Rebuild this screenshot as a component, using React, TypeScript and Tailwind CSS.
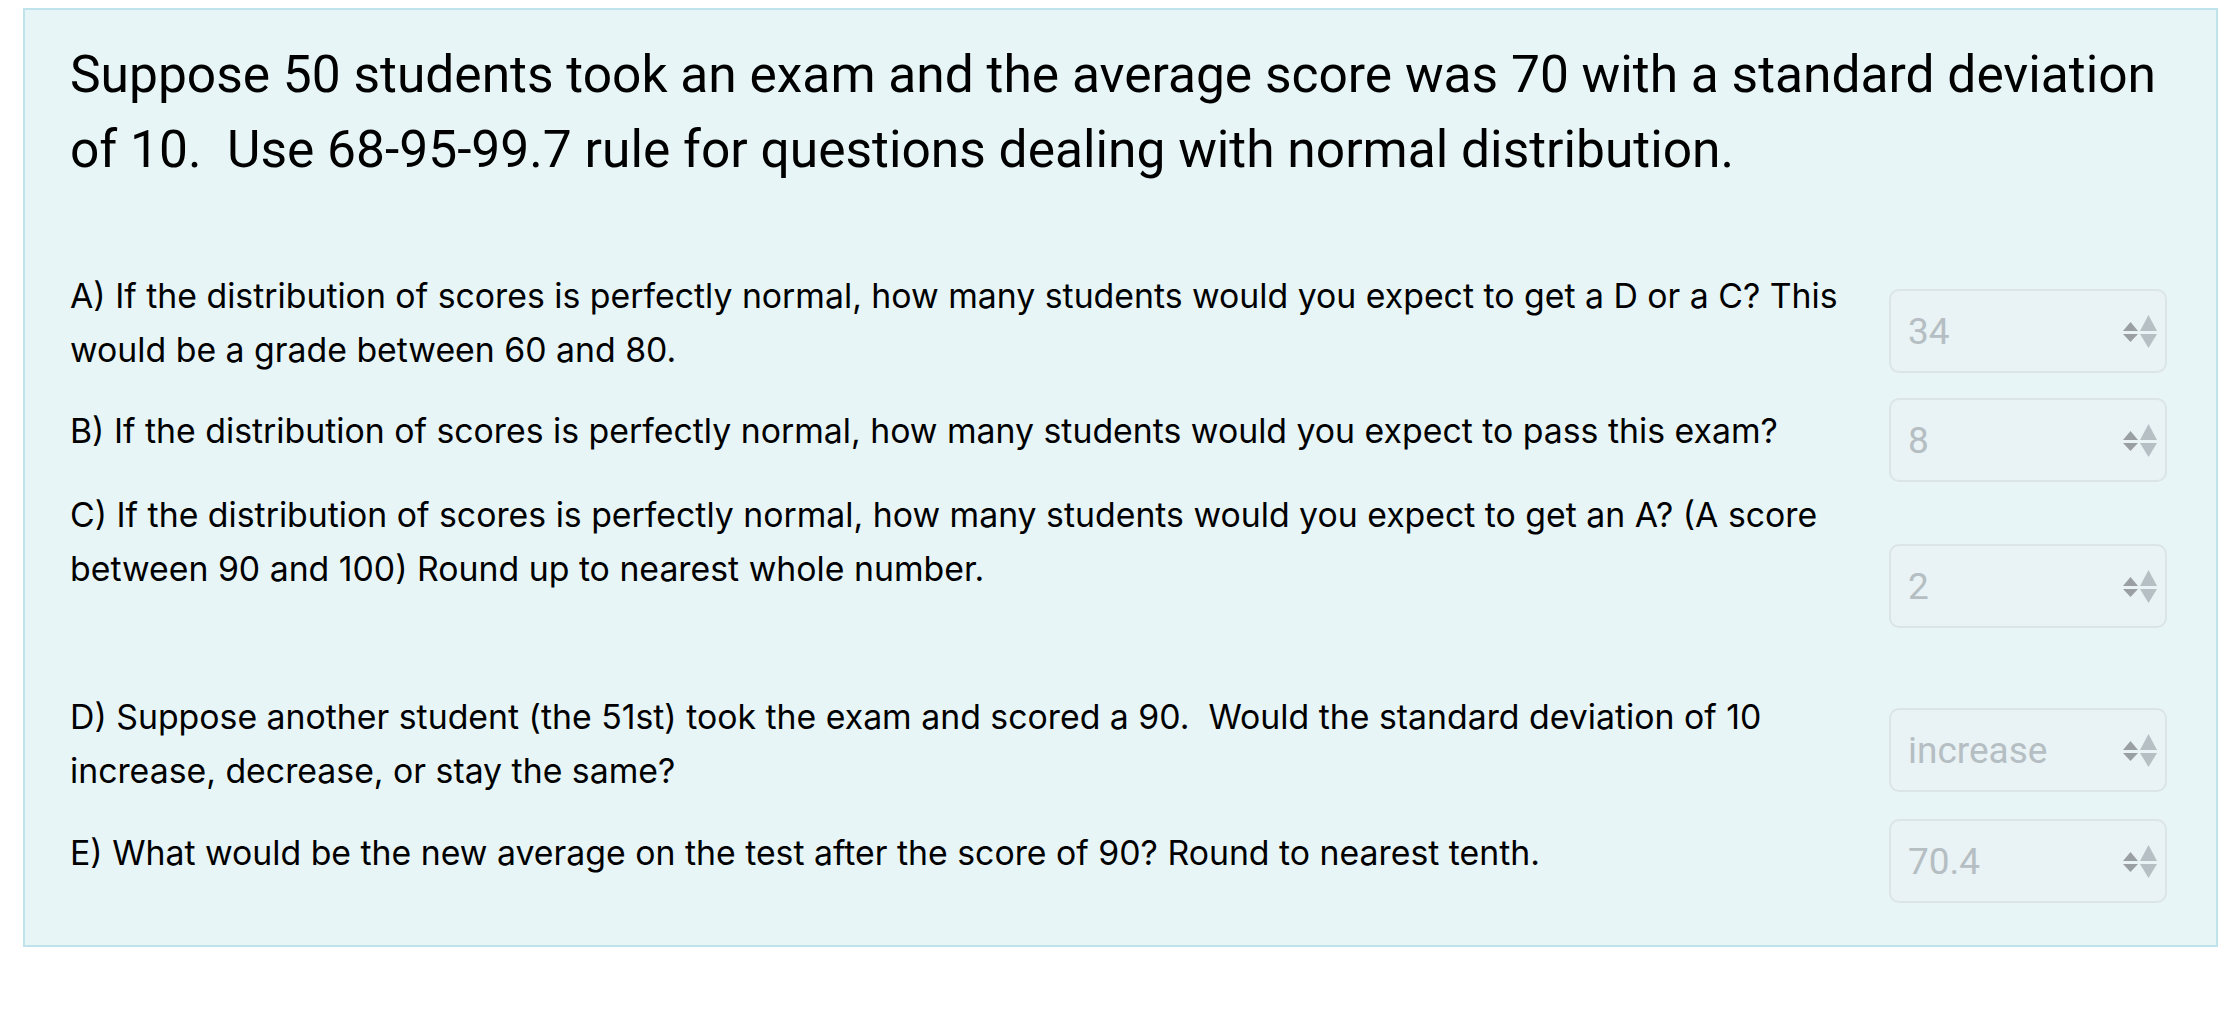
import React from 'react';

type Question = {
  text: string;
  answer: string;
  rowMt: string;
  textMt: string;
  inputMt: string;
};

const questions: Question[] = [
  {
    text: 'A) If the distribution of scores is perfectly normal, how many students would you expect to get a D or a C? This would be a grade between 60 and 80.',
    answer: '34',
    rowMt: 'mt-0',
    textMt: 'mt-0',
    inputMt: 'mt-[20px]',
  },
  {
    text: 'B) If the distribution of scores is perfectly normal, how many students would you expect to pass this exam?',
    answer: '8',
    rowMt: 'mt-[22px]',
    textMt: 'mt-[6px]',
    inputMt: 'mt-0',
  },
  {
    text: 'C) If the distribution of scores is perfectly normal, how many students would you expect to get an A? (A score between 90 and 100) Round up to nearest whole number.',
    answer: '2',
    rowMt: 'mt-[6px]',
    textMt: 'mt-0',
    inputMt: 'mt-[56px]',
  },
  {
    text: 'D) Suppose another student (the 51st) took the exam and scored a 90.  Would the standard deviation of 10 increase, decrease, or stay the same?',
    answer: 'increase',
    rowMt: 'mt-[62px]',
    textMt: 'mt-0',
    inputMt: 'mt-[18px]',
  },
  {
    text: 'E) What would be the new average on the test after the score of 90? Round to nearest tenth.',
    answer: '70.4',
    rowMt: 'mt-[22px]',
    textMt: 'mt-[7px]',
    inputMt: 'mt-0',
  },
];

function SpinArrows() {
  return (
    <svg width="34" height="33" viewBox="0 0 34 33" className="shrink-0">
      <polygon points="0,16 7.5,7 15,16" fill="#9a9fa3" />
      <polygon points="0,19 15,19 7.5,27" fill="#9a9fa3" />
      <polygon points="17,16 25.5,0 34,16" fill="#b6c0c4" />
      <polygon points="17,19 34,19 25.5,33" fill="#b6c0c4" />
    </svg>
  );
}

function AnswerBox({ value }: { value: string }) {
  return (
    <div className="flex h-[84px] w-[278px] items-center justify-between rounded-[10px] border-2 border-[#dbe4e7] bg-[#e9f2f4] pl-[17px] pr-[8px]">
      <span className="font-['Roboto',sans-serif] text-[37px] leading-none text-[#b5bec2]">{value}</span>
      <SpinArrows />
    </div>
  );
}

export default function App() {
  return (
    <div className="min-h-screen bg-white pt-[8px] pl-[23px] pr-[8px]">
      <div className="border-2 border-[#bee3ea] bg-[#e7f5f7] pl-[45px] pr-[49px] pt-[27px] pb-[42px]">
        {/* Prompt */}
        <h1 className="font-['Roboto',sans-serif] text-[51.5px] font-normal leading-[75px] text-black whitespace-pre-wrap">
          Suppose 50 students took an exam and the average score was 70 with a standard deviation of 10.  Use 68-95-99.7 rule for questions dealing with normal distribution.
        </h1>

        {/* Questions */}
        <div className="mt-[82px] flex flex-col">
          {questions.map((q) => (
            <div key={q.answer} className={`flex items-start justify-between ${q.rowMt}`}>
              <p
                className={`w-[1800px] whitespace-pre-wrap font-['Inter',sans-serif] text-[33.8px] leading-[53.5px] text-black ${q.textMt}`}
              >
                {q.text}
              </p>
              <div className={q.inputMt}>
                <AnswerBox value={q.answer} />
              </div>
            </div>
          ))}
        </div>
      </div>
    </div>
  );
}
